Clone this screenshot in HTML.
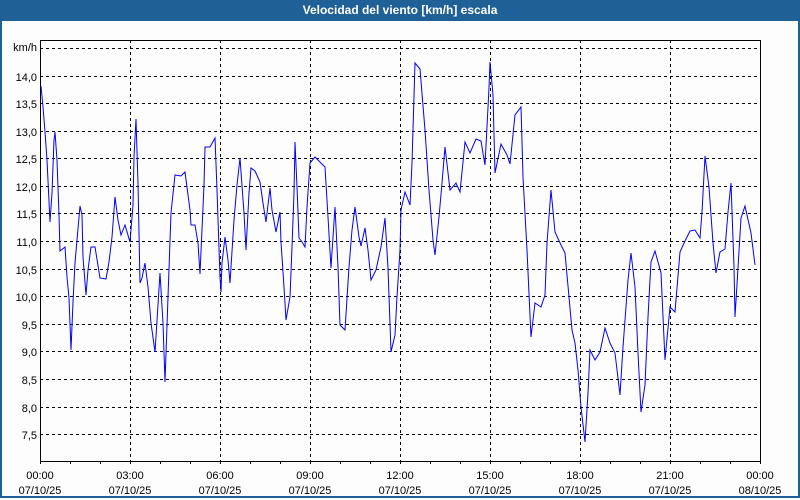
<!DOCTYPE html>
<html><head><meta charset="utf-8"><style>
html,body{margin:0;padding:0;}
body{width:800px;height:500px;overflow:hidden;background:#fdfdfd;font-family:"Liberation Sans",sans-serif;position:relative;}
.frame{position:absolute;left:0;top:0;width:796px;height:496px;border:2px solid #1f6096;border-top:none;}
.title{position:absolute;left:0;top:0;width:800px;height:21px;background:#1f6096;color:#fff;font-weight:bold;font-size:12px;line-height:21px;text-align:center;}
svg{position:absolute;left:0;top:0;}
text{font-family:"Liberation Sans",sans-serif;font-size:11px;fill:#000;}
</style></head><body>
<div class="frame"></div>
<div class="title">Velocidad del viento [km/h] escala</div>
<svg width="800" height="500">
<g stroke="#000" stroke-width="1" stroke-dasharray="3,3" shape-rendering="crispEdges">
<line x1="40" x2="760" y1="48.5" y2="48.5"/>
<line x1="40" x2="760" y1="76.5" y2="76.5"/>
<line x1="40" x2="760" y1="103.5" y2="103.5"/>
<line x1="40" x2="760" y1="131.5" y2="131.5"/>
<line x1="40" x2="760" y1="158.5" y2="158.5"/>
<line x1="40" x2="760" y1="186.5" y2="186.5"/>
<line x1="40" x2="760" y1="213.5" y2="213.5"/>
<line x1="40" x2="760" y1="241.5" y2="241.5"/>
<line x1="40" x2="760" y1="269.5" y2="269.5"/>
<line x1="40" x2="760" y1="296.5" y2="296.5"/>
<line x1="40" x2="760" y1="324.5" y2="324.5"/>
<line x1="40" x2="760" y1="351.5" y2="351.5"/>
<line x1="40" x2="760" y1="379.5" y2="379.5"/>
<line x1="40" x2="760" y1="407.5" y2="407.5"/>
<line x1="40" x2="760" y1="434.5" y2="434.5"/>
<line x1="130.5" x2="130.5" y1="40" y2="461"/>
<line x1="220.5" x2="220.5" y1="40" y2="461"/>
<line x1="310.5" x2="310.5" y1="40" y2="461"/>
<line x1="400.5" x2="400.5" y1="40" y2="461"/>
<line x1="490.5" x2="490.5" y1="40" y2="461"/>
<line x1="580.5" x2="580.5" y1="40" y2="461"/>
<line x1="670.5" x2="670.5" y1="40" y2="461"/>
</g>
<g stroke="#000" stroke-width="1" shape-rendering="crispEdges" fill="none">
<rect x="40.5" y="40.5" width="720" height="421"/>
<path d="M70.5 461v3M100.5 461v3M130.5 461v3M160.5 461v3M190.5 461v3M220.5 461v3M250.5 461v3M280.5 461v3M310.5 461v3M340.5 461v3M370.5 461v3M400.5 461v3M430.5 461v3M460.5 461v3M490.5 461v3M520.5 461v3M550.5 461v3M580.5 461v3M610.5 461v3M640.5 461v3M670.5 461v3M700.5 461v3M730.5 461v3M760.5 461v3M40.5 461v3"/>
</g>
<polyline fill="none" stroke="#0000ff" stroke-width="1" points="41,86 43,107 45,132 47,160 50,222 52,193 54,140 55,132 57,160 59,215 60,251 65,247 67,277 69,298 71,350 73,302 75,263 77,240 80,206 82,215 83,257 86,295 88,270 91,247 95,247 100,278 106,279 109,262 112,237 115,197 118,220 121,235 125,225 130,242 133,205 134,157 136,119 138,183 140,283 142,278 145,263 148,287 151,323 155,352 160,273 163,323 165,382 168,297 171,213 175,175 181,176 185,172 190,210 191,225 195,225 198,243 200,274 204,185 205,147 210,147 215,138 217,190 220,277 221,292 222,263 225,237 228,260 230,283 234,220 237,185 240,158 244,213 246,250 249,193 251,168 255,171 260,182 263,203 266,222 270,188 272,210 276,232 280,212 281,242 284,287 286,320 290,297 292,247 294,193 295,142 297,187 299,238 302,242 305,247 307,207 310,163 315,157 318,160 325,167 328,217 331,268 333,237 335,207 338,267 340,325 345,330 349,267 352,230 355,207 359,237 361,246 365,228 368,250 371,280 376,270 381,247 385,218 388,268 391,352 395,335 397,297 400,250 401,210 405,192 410,205 412,163 415,63 420,69 425,130 429,190 433,240 435,255 439,217 442,183 445,147 450,190 456,183 460,192 465,142 470,153 476,139 481,141 485,165 489,88 490,62 493,95 495,173 501,144 507,155 510,164 515,115 521,107 523,177 527,250 531,337 535,303 541,307 545,295 547,243 551,190 555,232 561,245 565,253 569,297 572,330 575,343 578,370 581,407 585,442 588,393 590,350 595,360 600,352 605,328 610,343 615,353 620,395 623,347 628,280 631,253 635,287 638,353 641,412 645,385 648,317 651,262 655,251 661,273 665,360 670,307 675,312 680,252 685,241 690,231 695,230 700,238 702,212 705,156 709,187 713,243 716,273 720,252 725,249 728,212 731,183 734,267 735,317 738,268 741,218 745,206 751,233 755,265"/>
<g text-anchor="end">
<text x="37" y="51" font-size="10">km/h</text>
<text x="37" y="81">14,0</text>
<text x="37" y="108">13,5</text>
<text x="37" y="136">13,0</text>
<text x="37" y="163">12,5</text>
<text x="37" y="191">12,0</text>
<text x="37" y="218">11,5</text>
<text x="37" y="246">11,0</text>
<text x="37" y="274">10,5</text>
<text x="37" y="301">10,0</text>
<text x="37" y="329">9,5</text>
<text x="37" y="356">9,0</text>
<text x="37" y="384">8,5</text>
<text x="37" y="412">8,0</text>
<text x="37" y="439">7,5</text>
</g>
<g text-anchor="middle">
<text x="40" y="479">00:00</text><text x="40" y="494">07/10/25</text>
<text x="130" y="479">03:00</text><text x="130" y="494">07/10/25</text>
<text x="220" y="479">06:00</text><text x="220" y="494">07/10/25</text>
<text x="310" y="479">09:00</text><text x="310" y="494">07/10/25</text>
<text x="400" y="479">12:00</text><text x="400" y="494">07/10/25</text>
<text x="490" y="479">15:00</text><text x="490" y="494">07/10/25</text>
<text x="580" y="479">18:00</text><text x="580" y="494">07/10/25</text>
<text x="670" y="479">21:00</text><text x="670" y="494">07/10/25</text>
<text x="760" y="479">00:00</text><text x="760" y="494">08/10/25</text>
</g>
</svg>
</body></html>
